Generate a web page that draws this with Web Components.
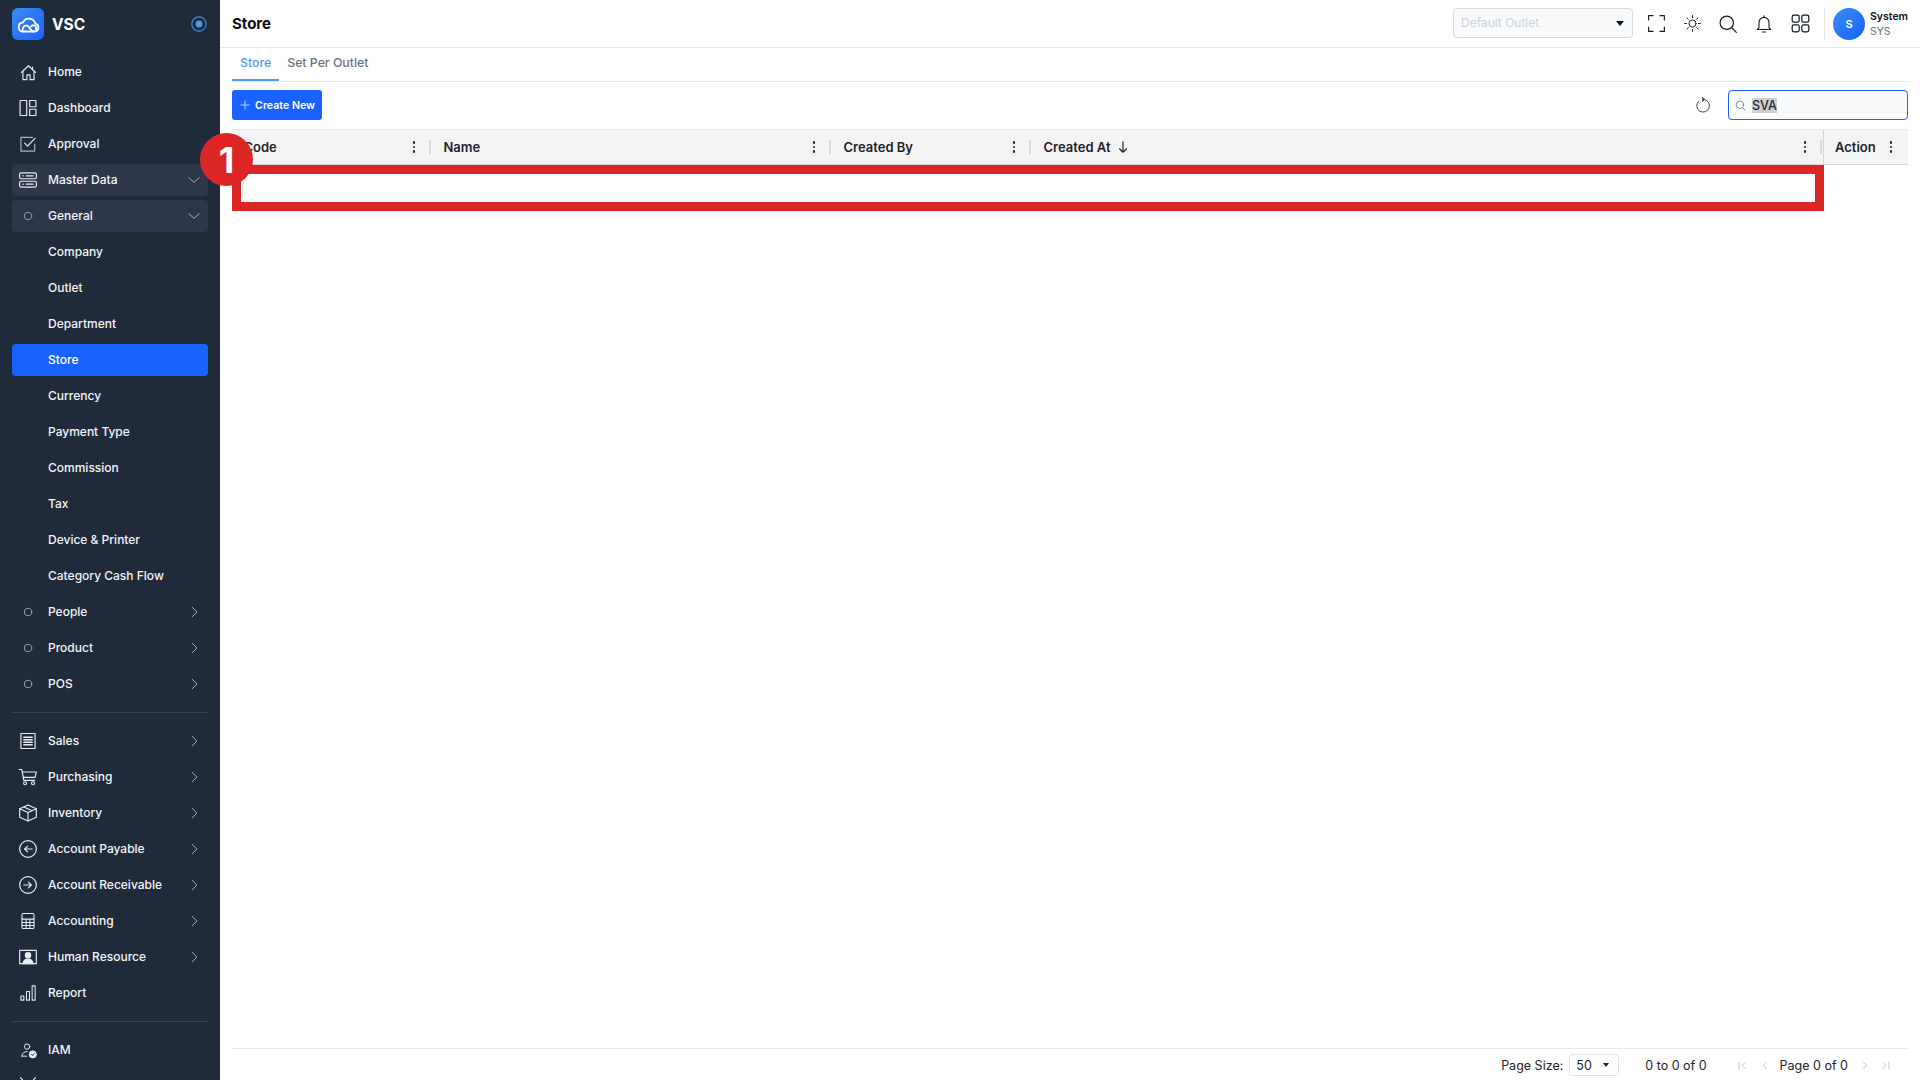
<!DOCTYPE html>
<html lang="en">
<head>
<meta charset="utf-8">
<title>Store</title>
<style>
  html, body { margin: 0; height: 100%; overflow: hidden; background: #fff; }
  body { font-family: Inter, "Liberation Sans", sans-serif; }
</style>
</head>
<body>
<app-shell></app-shell>
<script>
const svg = (body, size = 20, strokeWidth = 1.5) =>
    `<svg width="${size}" height="${size}" viewBox="0 0 24 24" fill="none" stroke="currentColor" stroke-width="${strokeWidth}" stroke-linecap="round" stroke-linejoin="round">${body}</svg>`;

const ICONS = {
    home: '<path d="M3 12 12 3.5 21 12"/><path d="M5 10.5V21h5v-6h4v6h5V10.5"/><path d="M17 5v3"/>',
    dashboard: '<rect x="2.5" y="3" width="8" height="18"/><rect x="14" y="3" width="7.5" height="7.5"/><rect x="14" y="13.5" width="7.5" height="7.5"/>',
    approval: '<path d="M20 12v8.5H3.500V4h14" opacity=".7"/><path d="m8 11 3.500 3.500L20.500 5"/>',
    server: '<rect x="2" y="3.500" width="20" height="7" rx="1.500"/><rect x="2" y="13.500" width="20" height="7" rx="1.500"/><path d="M6 7h.5M6 17h.5M10 7h8M10 17h8"/>',
    dot: '<circle cx="12" cy="12" r="5"/>',
    sales: '<rect x="3.500" y="3" width="17" height="18"/><path d="M7 7.500h10M7 10.500h10M7 13.500h10M7 16.500h10" stroke-width="1.800"/>',
    cart: '<path d="M1.500 3h3l2.500 13h13"/><path d="M5.200 6H22l-1.500 6.500H6.500"/><circle cx="8.500" cy="19.500" r="1.800"/><circle cx="18" cy="19.500" r="1.800"/>',
    box: '<path d="M12 2.500 22 7v10l-10 4.500L2 17V7z"/><path d="M2 7l10 4.500L22 7M12 11.500v10M7 4.800l10 4.500"/>',
    payable: '<circle cx="12" cy="12" r="10"/><path d="M17 12H8M11.500 8.500 8 12l3.500 3.500"/>',
    receivable: '<circle cx="12" cy="12" r="10"/><path d="M7 12h9M12.500 8.500 16 12l-3.500 3.500"/>',
    calc: '<rect x="4" y="2" width="16" height="20" rx="1.500"/><path d="M4 9.500h16M4 14h16M4 18h16M9.500 9.500V22M14.500 9.500V22"/>',
    hr: '<path d="M2 4h20v16H2z"/><circle cx="12" cy="10" r="3.200" fill="currentColor"/><path d="M6 20c.5-4 3-5.500 6-5.500s5.500 1.500 6 5.500z" fill="currentColor"/>',
    report: '<rect x="2.500" y="16" width="4" height="5.500"/><rect x="10" y="10" width="4" height="11.500"/><rect x="17.500" y="2.500" width="4" height="19"/>',
    iam: '<circle cx="10" cy="6.500" r="3.800"/><path d="M2.500 20c.5-4.500 3.500-6.500 7.500-6.500"/><path d="M2.500 20h7"/><circle cx="18" cy="17.500" r="5" fill="currentColor"/><path d="m15.800 17.500 1.600 1.600 2.800-2.800" stroke="#1f2a3b"/>',
    tools: '<path d="m3 2 9 10M21 2l-9 10"/><path d="M3 22l6-6M21 22l-6-6"/>',
    expand: '<path d="M3 8V3h5M16 3h5v5M21 16v5h-5M8 21H3v-5"/>',
    sun: '<circle cx="12" cy="12" r="4.500"/><path d="M12 2v2.500M12 19.500V22M2 12h2.500M19.500 12H22M5 5l1.800 1.800M17.200 17.200 19 19M5 19l1.800-1.800M17.200 6.800 19 5"/>',
    search: '<circle cx="10.500" cy="10.500" r="8"/><path d="m16.500 16.500 5.500 5.500"/>',
    bell: '<path d="M6 16.500V10a6 6 0 0 1 12 0v6.500l2 2H4z"/><path d="M12 2v2M10 21.500h4"/>',
    grid: '<rect x="2.500" y="2.500" width="8" height="8" rx="2"/><rect x="13.500" y="2.500" width="8" height="8" rx="2"/><rect x="2.500" y="13.500" width="8" height="8" rx="2"/><rect x="13.500" y="13.500" width="8" height="8" rx="2"/>',
    refresh: '<path d="M13 4.500A8.500 8.500 0 1 1 6 7"/><path d="M11 1.500 14 4.500 11 7.500" fill="currentColor"/>',
    chevronRight: '<path d="m9 4 8 8-8 8"/>',
    chevronDown: '<path d="m3 8 9 8 9-8"/>'
};

// drawn size per nav icon, the rest use 20
const ICON_SIZES = { dot: 18, home: 19, report: 18, calc: 18, iam: 17 };

class NavItem extends HTMLElement {
    connectedCallback() {
        const chevron = this.getAttribute('chevron');
        const iconName = this.getAttribute('icon');
        const size = ICON_SIZES[iconName] || 20;
        this.attachShadow({ mode: 'open' }).innerHTML = `
            <style>
                :host { display: flex; align-items: center; height: 32px; border-radius: 4px; padding: 0 7px 0 6px; color: #f4f6f9; font-size: 12px; font-weight: 500; flex: none; }
                :host([open]) { background: #2d3749; }
                :host([active]) { background: #1a62ff; color: #fff; }
                .icon { width: 20px; height: 20px; margin-right: 10px; display: flex; align-items: center; justify-content: center; color: #e9ecf1; flex: none; }
                .icon.dot { color: #9aa3b0; }
                .label { flex: 1; white-space: nowrap; padding-bottom: 1px; }
                .chev { width: 14px; height: 14px; display: flex; color: #a8afba; }
                svg { display: block; }
            </style>
            <span class="icon ${iconName === 'dot' ? 'dot' : ''}">${iconName ? svg(ICONS[iconName], size, iconName === 'dot' ? 1.3 : 1.4) : ''}</span>
            <span class="label"><slot></slot></span>
            ${chevron ? `<span class="chev">${svg(chevron === 'down' ? ICONS.chevronDown : ICONS.chevronRight, 14, 1.7)}</span>` : ''}
        `;
    }
}
customElements.define('nav-item', NavItem);

class SideBar extends HTMLElement {
    connectedCallback() {
        const group1 = [
            ['Home', 'home'], ['Dashboard', 'dashboard'], ['Approval', 'approval'],
            ['Master Data', 'server', 'down', 'open'], ['General', 'dot', 'down', 'open'],
            ['Company'], ['Outlet'], ['Department'], ['Store', '', '', 'active'],
            ['Currency'], ['Payment Type'], ['Commission'], ['Tax'], ['Device & Printer'], ['Category Cash Flow'],
            ['People', 'dot', 'right'], ['Product', 'dot', 'right'], ['POS', 'dot', 'right']
        ];
        const group2 = [
            ['Sales', 'sales', 'right'], ['Purchasing', 'cart', 'right'], ['Inventory', 'box', 'right'],
            ['Account Payable', 'payable', 'right'], ['Account Receivable', 'receivable', 'right'],
            ['Accounting', 'calc', 'right'], ['Human Resource', 'hr', 'right'], ['Report', 'report']
        ];
        const group3 = [['IAM', 'iam'], ['', 'tools']];
        const item = ([label, icon, chevron, state]) =>
            `<nav-item ${icon ? `icon="${icon}"` : ''} ${chevron ? `chevron="${chevron}"` : ''} ${state || ''}>${label.replace('&', '&amp;')}</nav-item>`;
        this.attachShadow({ mode: 'open' }).innerHTML = `
            <style>
                :host { display: flex; flex-direction: column; width: 220px; height: 100vh; overflow: hidden; background: #1f2a3b; padding: 8px 12px 0; box-sizing: border-box; flex: none; }
                .brand { display: flex; align-items: center; height: 32px; margin-bottom: 16px; flex: none; color: #fff; }
                .logo { width: 32px; height: 32px; border-radius: 6px; background: linear-gradient(135deg, #3b8bf2, #1a62ff); display: flex; align-items: center; justify-content: center; }
                .name { margin-left: 8px; font-size: 15.500px; font-weight: 700; flex: 1; }
                nav { display: flex; flex-direction: column; gap: 4px; flex: none; }
                hr { border: 0; border-top: 1px solid #364254; margin: 12px 0; flex: none; width: 100%; }
            </style>
            <div class="brand">
                <span class="logo">
                    <svg width="24" height="17" viewBox="0 0 24 17" fill="none" stroke="#fff" stroke-width="1.800" stroke-linejoin="round" stroke-linecap="round">
                        <path d="M6 15.500H18.500a4 4 0 0 0 .8-7.900A6.500 6.500 0 0 0 7 6.500a4.600 4.600 0 0 0-1 9z"/>
                        <path d="M7 15.500c-1.500-3.500 1-6 3.500-6 3 0 3.500 6 7 6M15 10.500c2-2.500 6-1 5 3"/>
                    </svg>
                </span>
                <span class="name">VSC</span>
                <svg width="16" height="16" viewBox="0 0 16 16" style="margin-right:1px"><circle cx="8" cy="8" r="7.200" fill="none" stroke="#3f8ee8" stroke-width="1.200"/><circle cx="8" cy="8" r="3.400" fill="#4a9bf2"/></svg>
            </div>
            <nav>${group1.map(item).join('')}</nav>
            <hr>
            <nav>${group2.map(item).join('')}</nav>
            <hr>
            <nav>${group3.map(item).join('')}</nav>
        `;
    }
}
customElements.define('side-bar', SideBar);

class TopBar extends HTMLElement {
    connectedCallback() {
        this.attachShadow({ mode: 'open' }).innerHTML = `
            <style>
                :host { display: flex; align-items: center; height: 48px; box-sizing: border-box; border-bottom: 1px solid #e5e7eb; padding: 0 12px; flex: none; color: #111827; }
                h1 { margin: 0; font-size: 15px; font-weight: 700; flex: 1; color: #0b0f19; }
                .select { width: 180px; height: 30px; box-sizing: border-box; border: 1px solid #d5dae1; border-radius: 4px; background: #f8fafc; color: #cdd2d9; font-size: 12px; display: flex; align-items: center; padding: 0 7px; justify-content: space-between; margin: -2px 5px 0 0; }
                .caret { width: 0; height: 0; border: 4px solid transparent; border-top: 5px solid #111827; border-bottom: 0; margin: 2px 1px 0 0; }
                .btn { width: 36px; height: 32px; display: flex; align-items: center; justify-content: center; }
                .sep { width: 1px; height: 32px; background: #e5e7eb; margin: 0 8px 0 6px; }
                .avatar { width: 32px; height: 32px; border-radius: 50%; background: linear-gradient(135deg, #3b8bf2, #1a62ff); color: #fff; font-size: 11px; font-weight: 600; display: flex; align-items: center; justify-content: center; }
                .user { margin-left: 5px; line-height: 15px; font-size: 10.500px; width: 38px; }
                .user b { display: block; font-weight: 600; color: #0b0f19; }
                .user span { color: #6b7280; }
                svg { display: block; }
            </style>
            <h1>Store</h1>
            <div class="select"><span>Default Outlet</span><i class="caret"></i></div>
            <span class="btn">${svg(ICONS.expand, 21, 1.3)}</span>
            <span class="btn">${svg(ICONS.sun, 19, 1.2)}</span>
            <span class="btn">${svg(ICONS.search, 20, 1.4)}</span>
            <span class="btn">${svg(ICONS.bell, 20, 1.3)}</span>
            <span class="btn">${svg(ICONS.grid, 21, 1.4)}</span>
            <span class="sep"></span>
            <span class="avatar">S</span>
            <div class="user"><b>System</b><span>SYS</span></div>
        `;
    }
}
customElements.define('top-bar', TopBar);

class TabBar extends HTMLElement {
    connectedCallback() {
        this.attachShadow({ mode: 'open' }).innerHTML = `
            <style>
                :host { display: flex; height: 34px; box-sizing: border-box; border-bottom: 1px solid #e5e7eb; flex: none; font-size: 12.300px; font-weight: 500; color: #6b7280; }
                .tab { padding: 0 8px; display: flex; align-items: center; height: 33px; box-sizing: border-box; padding-bottom: 4px; }
                .tab.on { color: #4a9bf8; border-bottom: 2px solid #4a9bf8; padding: 0 8px 2px; }
            </style>
            <span class="tab on">Store</span>
            <span class="tab">Set Per Outlet</span>
        `;
    }
}
customElements.define('tab-bar', TabBar);

class TableToolbar extends HTMLElement {
    connectedCallback() {
        this.attachShadow({ mode: 'open' }).innerHTML = `
            <style>
                :host { display: flex; align-items: center; height: 30px; margin: 8px 0 9px; flex: none; }
                .create { width: 90px; height: 30px; border-radius: 3px; background: #1a62ff; color: #fff; font-size: 10.600px; font-weight: 600; display: flex; align-items: center; justify-content: center; gap: 4px; }
                .create svg { color: #bcd2ff; }
                .refresh { margin-left: auto; margin-right: 16px; color: #374151; }
                .search { width: 180px; height: 30px; box-sizing: border-box; border: 1px solid #1a62ff; border-radius: 4px; background: #f8fafc; display: flex; align-items: center; padding: 0 6px; gap: 6px; font-size: 12.500px; font-weight: 500; color: #1f2937; }
                .search mark { background: #cfcfcf; color: inherit; }
                .search svg { color: #6b7280; }
                svg { display: block; }
            </style>
            <span class="create">${svg('<path d="M12 4v16M4 12h16"/>', 12, 2)}Create New</span>
            <span class="refresh">${svg(ICONS.refresh, 18, 1.3)}</span>
            <div class="search">${svg(ICONS.search, 11, 1.8)}<mark>SVA</mark></div>
        `;
    }
}
customElements.define('table-toolbar', TableToolbar);

class GridHeaderCell extends HTMLElement {
    connectedCallback() {
        const sorted = this.hasAttribute('sorted');
        const sep = !this.hasAttribute('nosep');
        this.attachShadow({ mode: 'open' }).innerHTML = `
            <style>
                :host { display: flex; align-items: center; height: 100%; padding: 0 0 0 11.500px; font-size: 13px; font-weight: 600; color: #1f2329; box-sizing: border-box; }
                .label { flex: 1; display: flex; align-items: center; gap: 5px; white-space: nowrap; }
                .dots { display: flex; flex-direction: column; gap: 2px; margin-right: var(--dots-gap, 14px); }
                .dots i { width: 2.500px; height: 2.500px; border-radius: 50%; background: #1f2329; }
                .sep { width: 2px; height: 14px; background: #d9d9d9; margin-right: 1px; }
                svg { display: block; }
            </style>
            <span class="label"><slot></slot>${sorted ? svg('<path d="M12 3v18M6 15l6 6 6-6"/>', 14, 2) : ''}</span>
            <span class="dots"><i></i><i></i><i></i></span>
            ${sep ? '<span class="sep"></span>' : ''}
        `;
    }
}
customElements.define('grid-header-cell', GridHeaderCell);

class DataGrid extends HTMLElement {
    connectedCallback() {
        this.attachShadow({ mode: 'open' }).innerHTML = `
            <style>
                :host { display: flex; flex-direction: column; flex: 1; min-height: 0; position: relative; }
                .head { display: grid; grid-template-columns: 200px 400px 200px 1fr 85px; height: 36px; box-sizing: border-box; background: #f4f4f5; border-top: 1px solid #e5e7eb; border-bottom: 1px solid #d4d4d8; flex: none; }
                .body { flex: 1; }
                .action { border-left: 1px solid #d4d4d8; --dots-gap: 16px; padding-left: 11px; }
                .foot { flex: none; height: 32px; box-sizing: border-box; border-top: 1px solid #e5e7eb; display: flex; align-items: center; justify-content: flex-end; font-size: 12.500px; color: #1f2329; padding: 1px 17px 0 0; }
                .size { display: flex; align-items: center; justify-content: space-between; width: 50px; height: 22px; box-sizing: border-box; border: 1px solid #dfe1e5; border-radius: 4px; margin: 0 26px 0 6px; padding: 0 9px 0 6px; }
                .caret { width: 0; height: 0; border: 3.500px solid transparent; border-top: 4.500px solid #1f2329; border-bottom: 0; }
                .pg { color: #b5b9bf; width: 10px; display: flex; justify-content: center; }
                .pages { display: flex; align-items: center; margin-left: 30px; }
                .pages span.t { margin: 0 12px 0 10px; }
                .frame { position: absolute; left: 0; top: 36px; width: 1592px; height: 46px; box-sizing: border-box; border: 9px solid #dc2626; }
                .badge { position: absolute; left: -32px; top: 4px; width: 53px; height: 53px; border-radius: 50%; background: #dc2626; color: #fff; font: 700 36px/54px Inter, "Liberation Sans", sans-serif; text-align: center; }
                svg { display: block; }
            </style>
            <div class="head">
                <grid-header-cell>Code</grid-header-cell>
                <grid-header-cell>Name</grid-header-cell>
                <grid-header-cell>Created By</grid-header-cell>
                <grid-header-cell sorted>Created At</grid-header-cell>
                <grid-header-cell class="action" nosep>Action</grid-header-cell>
            </div>
            <div class="body"></div>
            <div class="foot">
                <span>Page Size:</span>
                <div class="size"><span>50</span><i class="caret"></i></div>
                <span>0 to 0 of 0</span>
                <div class="pages">
                    <span class="pg">${svg('<path d="M5 4v16M20 4l-8 8 8 8"/>', 11, 2)}</span>
                    <span class="pg" style="margin-left:13px">${svg('<path d="m16 4-8 8 8 8"/>', 11, 2)}</span>
                    <span class="t">Page 0 of 0</span>
                    <span class="pg">${svg('<path d="m8 4 8 8-8 8"/>', 11, 2)}</span>
                    <span class="pg" style="margin-left:11px">${svg('<path d="M19 4v16M4 4l8 8-8 8"/>', 11, 2)}</span>
                </div>
            </div>
            <div class="frame"></div>
            <div class="badge">1</div>
        `;
    }
}
customElements.define('data-grid', DataGrid);

class AppShell extends HTMLElement {
    connectedCallback() {
        this.attachShadow({ mode: 'open' }).innerHTML = `
            <style>
                :host { display: flex; height: 100vh; width: 100vw; overflow: hidden; }
                main { flex: 1; min-width: 0; display: flex; flex-direction: column; }
                .content { flex: 1; min-height: 0; display: flex; flex-direction: column; padding: 0 12px; }
            </style>
            <side-bar></side-bar>
            <main>
                <top-bar></top-bar>
                <div class="content">
                    <tab-bar></tab-bar>
                    <table-toolbar></table-toolbar>
                    <data-grid></data-grid>
                </div>
            </main>
        `;
    }
}
customElements.define('app-shell', AppShell);
</script>
</body>
</html>
